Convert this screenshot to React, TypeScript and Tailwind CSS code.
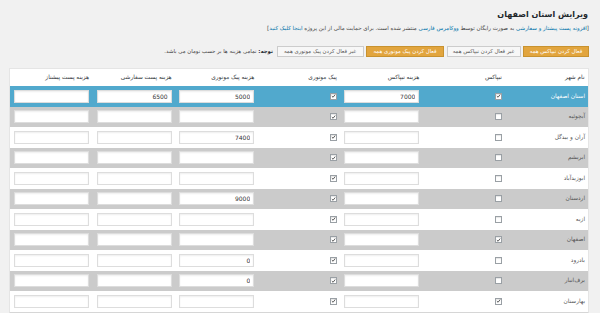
import React from "react";

type City = {
  name: string;
  tipax: boolean;
  tipaxCost: string;
  pik: boolean;
  pikCost: string;
  sefareshi: string;
  pishtaz: string;
};

const cities: City[] = [
  { name: "استان اصفهان", tipax: true, tipaxCost: "7000", pik: true, pikCost: "5000", sefareshi: "6500", pishtaz: "" },
  { name: "آبچوئیه", tipax: false, tipaxCost: "", pik: true, pikCost: "", sefareshi: "", pishtaz: "" },
  { name: "آران و بیدگل", tipax: false, tipaxCost: "", pik: true, pikCost: "7400", sefareshi: "", pishtaz: "" },
  { name: "ابریشم", tipax: false, tipaxCost: "", pik: true, pikCost: "", sefareshi: "", pishtaz: "" },
  { name: "ابوزیدآباد", tipax: false, tipaxCost: "", pik: true, pikCost: "", sefareshi: "", pishtaz: "" },
  { name: "اردستان", tipax: false, tipaxCost: "", pik: true, pikCost: "9000", sefareshi: "", pishtaz: "" },
  { name: "ازیه", tipax: false, tipaxCost: "", pik: true, pikCost: "", sefareshi: "", pishtaz: "" },
  { name: "اصفهان", tipax: true, tipaxCost: "", pik: true, pikCost: "", sefareshi: "", pishtaz: "" },
  { name: "بادرود", tipax: false, tipaxCost: "", pik: true, pikCost: "0", sefareshi: "", pishtaz: "" },
  { name: "برف‌انبار", tipax: false, tipaxCost: "", pik: true, pikCost: "0", sefareshi: "", pishtaz: "" },
  { name: "بهارستان", tipax: true, tipaxCost: "", pik: true, pikCost: "", sefareshi: "", pishtaz: "" },
];

const headers = ["نام شهر", "تیپاکس", "هزینه تیپاکس", "پیک موتوری", "هزینه پیک موتوری", "هزینه پست سفارشی", "هزینه پست پیشتاز"];

function Check({ checked }: { checked: boolean }) {
  return (
    <span className="flex h-[7px] w-[7px] items-center justify-center border border-[#9aa0a5] bg-white shadow-[inset_0_1px_1px_rgba(0,0,0,0.1)]">
      {checked && (
        <svg width="6" height="6" viewBox="0 0 6 6">
          <path d="M1 3.1 L2.5 4.5 L5 1.3" fill="none" stroke="#4a4a4a" strokeWidth="1.1" />
        </svg>
      )}
    </span>
  );
}

function CostInput({ value }: { value: string }) {
  return (
    <input
      type="text"
      defaultValue={value}
      className="h-[13px] w-[75px] border border-[#dddddd] bg-white px-[3px] text-[6px] text-[#333] shadow-[inset_0_1px_2px_rgba(0,0,0,0.07)] outline-none"
    />
  );
}

export default function App() {
  return (
    <div
      dir="rtl"
      className="min-h-screen bg-[#f1f1f1] pl-[9px] pr-[11px] pt-[8px] text-[#444] antialiased"
      style={{ fontFamily: '"DejaVu Sans", Tahoma, sans-serif' }}
    >
      <h1 className="h-[14px] pr-[1px] text-[8px] font-bold leading-[14px] text-[#23282d]">ویرایش استان اصفهان</h1>

      <p className="h-[12px] whitespace-nowrap text-[5.5px] leading-[12px] text-[#444]">
        [<a className="text-[#0073aa]">افزونه پست پیشتاز و سفارشی</a> به صورت رایگان توسط{" "}
        <a className="text-[#0073aa]">ووکامرس فارسی</a> منتشر شده است. برای حمایت مالی از این پروژه{" "}
        <a className="text-[#0073aa]">اینجا کلیک کنید</a>]
      </p>

      <div className="mt-[12px] flex h-[11px] items-center gap-[2.5px] whitespace-nowrap text-[5.4px]">
        <button className="flex h-[11px] w-[66px] items-center justify-center border border-[#c8922f] bg-[#e2a53e] text-white">
          فعال کردن تیپاکس همه
        </button>
        <button className="flex h-[11px] w-[74px] items-center justify-center border border-[#cccccc] bg-[#f7f7f7] text-[#555]">
          غیر فعال کردن تیپاکس همه
        </button>
        <button className="flex h-[11px] w-[78px] items-center justify-center border border-[#c8922f] bg-[#e2a53e] text-white">
          فعال کردن پیک موتوری همه
        </button>
        <button className="flex h-[11px] w-[87px] items-center justify-center border border-[#cccccc] bg-[#f7f7f7] text-[#555]">
          غیر فعال کردن پیک موتوری همه
        </button>
        <span className="mr-[1px] text-[#444]">
          <b className="text-[#23282d]">توجه:</b> تمامی هزینه ها بر حسب تومان می باشد.
        </span>
      </div>

      <div className="mt-[11px] border border-b-2 border-[#e5e5e5] border-b-[#d6d6d6] bg-white">
        <div className="grid h-[17px] grid-cols-7 items-center text-[5.8px] text-[#32373c]">
          {headers.map((h) => (
            <div key={h} className="whitespace-nowrap pr-[3.5px]">
              {h}
            </div>
          ))}
        </div>
        {cities.map((c, i) => {
          const bg = i === 0 ? "bg-[#51a9cd]" : i % 2 === 1 ? "bg-[#cbcbcb]" : "bg-white";
          const nameColor = i === 0 ? "text-white" : "text-[#555]";
          return (
            <div key={c.name} className={`grid h-[20.5px] grid-cols-7 items-center ${bg}`}>
              <div className={`whitespace-nowrap pr-[3px] text-[5.8px] ${nameColor}`}>{c.name}</div>
              <div className="flex pr-[3.5px]">
                <Check checked={c.tipax} />
              </div>
              <div className="flex pr-[3.5px]">
                <CostInput value={c.tipaxCost} />
              </div>
              <div className="flex pr-[3.5px]">
                <Check checked={c.pik} />
              </div>
              <div className="flex pr-[3.5px]">
                <CostInput value={c.pikCost} />
              </div>
              <div className="flex pr-[3.5px]">
                <CostInput value={c.sefareshi} />
              </div>
              <div className="flex pr-[3.5px]">
                <CostInput value={c.pishtaz} />
              </div>
            </div>
          );
        })}
      </div>
    </div>
  );
}
